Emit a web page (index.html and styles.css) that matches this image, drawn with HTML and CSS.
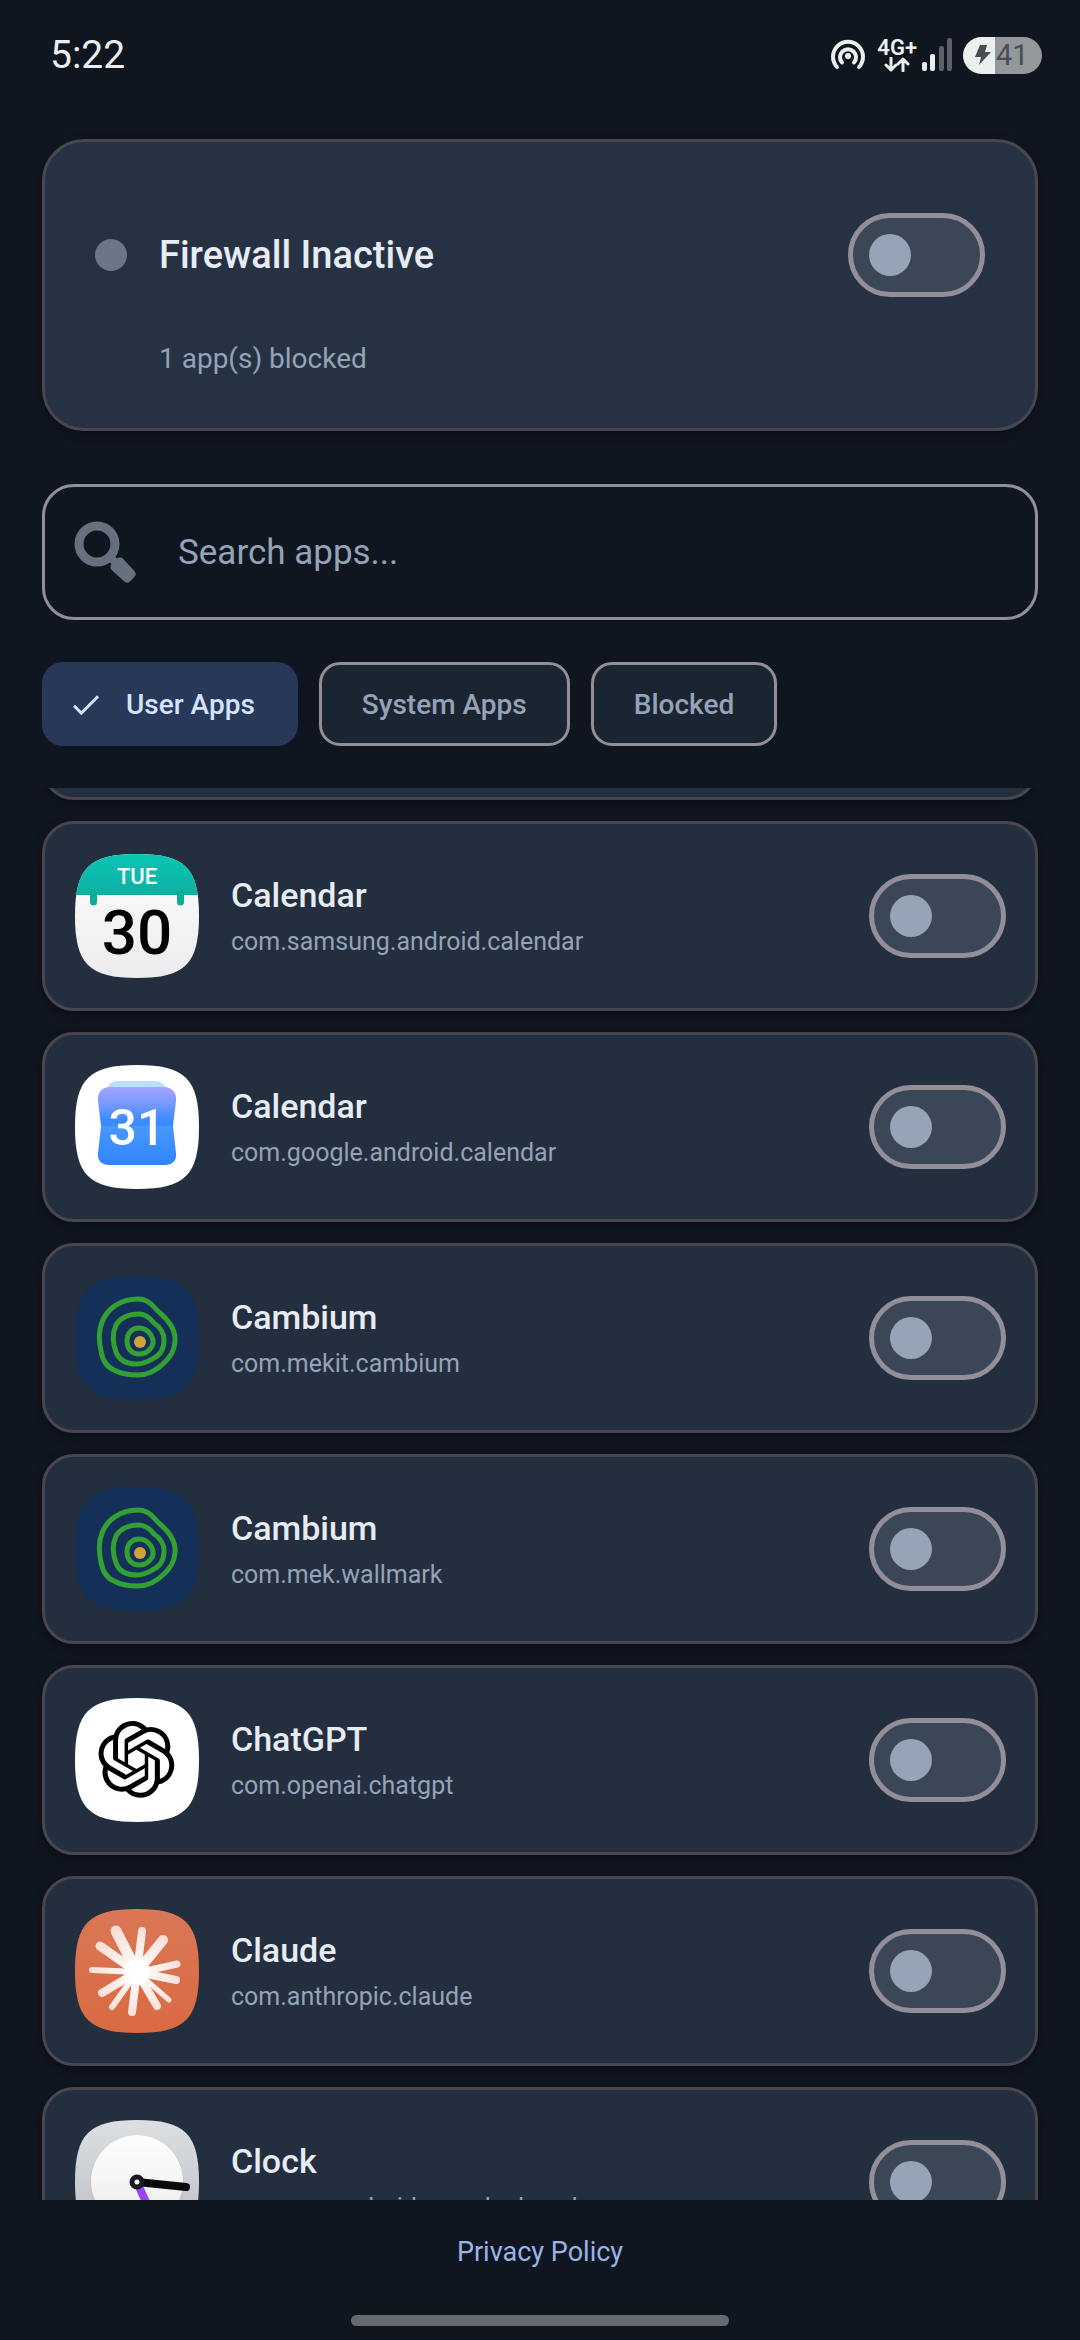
FILE: index.html
```html
<!DOCTYPE html>
<html lang="en">
<head>
  <meta charset="UTF-8" />
  <meta name="viewport" content="width=device-width, initial-scale=1.0" />
  <title>Firewall</title>
  <link rel="stylesheet" href="styles.css">
</head>
<body>
  <!-- shared icon shapes -->
  <svg class="defs" width="0" height="0" aria-hidden="true">
    <defs>
      <clipPath id="plate"><path d="M62 0C110 0 124 14 124 62C124 110 110 124 62 124C14 124 0 110 0 62C0 14 14 0 62 0Z"/></clipPath>
      <linearGradient id="teal" x1="0" y1="0" x2="0" y2="1"><stop offset="0" stop-color="#08c7b6"/><stop offset="1" stop-color="#0eafa0"/></linearGradient>
      <linearGradient id="paper" x1="0" y1="0" x2="0" y2="1"><stop offset="0" stop-color="#fdfdfd"/><stop offset="1" stop-color="#ececee"/></linearGradient>
      <linearGradient id="sheet" x1="0" y1="0" x2="0" y2="1"><stop offset="0" stop-color="#a5a4ff"/><stop offset=".2" stop-color="#7b9aff"/><stop offset=".42" stop-color="#3e8bff"/><stop offset=".49" stop-color="#3a89ff"/><stop offset=".5" stop-color="#4998ff"/><stop offset="1" stop-color="#3184ff"/></linearGradient>
      <linearGradient id="clay" x1="0" y1="0" x2="0" y2="1"><stop offset="0" stop-color="#da7756"/><stop offset="1" stop-color="#d96a42"/></linearGradient>
      <radialGradient id="burst" gradientUnits="userSpaceOnUse" cx="62" cy="63" r="48"><stop offset="0" stop-color="#ffffff"/><stop offset="1" stop-color="#f8ded5"/></radialGradient>
      <linearGradient id="steel" x1="0" y1="0" x2="0" y2="1"><stop offset="0" stop-color="#dce0e3"/><stop offset="1" stop-color="#b9bbc0"/></linearGradient>
    </defs>
    <symbol id="cambium" viewBox="0 0 124 124">
      <rect width="124" height="124" fill="#143059" clip-path="url(#plate)"/>
      <g fill="none" stroke="#32a032" stroke-width="5">
        <path d="M63 23C71 23 76 27 80 32C84 37 88 39 92 44C98 51 101 57 100 66C99 76 95 81 89 87C82 94 74 99 63 99C55 99 46 98 39 94C29 90 27 81 26 75C24 66 23 56 27 46C32 33 45 23 63 23Z"/>
        <path d="M64 38C71 38 75 42 79 47C85 51 89 56 89 64C89 72 87 78 79 82C74 85 70 88 62 88C51 88 44 84 41 76C38 68 37 58 41 49C45 42 54 38 64 38Z"/>
        <path d="M64 52C71 52 74 56 76 59C79 64 79 69 75 73C72 77 69 78 64 78C57 78 52 73 52 65C52 57 57 52 64 52Z"/>
      </g>
      <circle cx="65" cy="66" r="6" fill="#cda43b"/>
    </symbol>
  </svg>

  <header class="status-bar">
    <span class="clock">5:22</span>
    <div class="status-icons">
      <svg width="36" height="34" viewBox="0 0 36 34" fill="none" stroke="#eceff0" stroke-width="4" stroke-linecap="round">
        <path d="M7 29A15 15 0 1 1 29 29"/>
        <path d="M12 24.500A8 8 0 1 1 24 24.500"/>
        <circle cx="18" cy="18" r="3" fill="#eceff0" stroke="none"/>
      </svg>
      <div class="network">
        <span>4G+</span>
        <svg width="26" height="15" viewBox="0 0 26 15" fill="none" stroke="#eceff0" stroke-width="3" stroke-linecap="round" stroke-linejoin="round">
          <path d="M7 1V13M2 8L7 13L12 8M19 14V2M14 7L19 2L24 7"/>
        </svg>
      </div>
      <svg class="signal" width="30" height="34" viewBox="0 0 30 34">
        <rect x="0" y="24" width="5" height="9" rx="2" fill="#eceff0"/>
        <rect x="8" y="16" width="5" height="17" rx="2" fill="#eceff0"/>
        <rect x="17" y="8" width="5" height="25" rx="2" fill="#5c6067"/>
        <rect x="25" y="0" width="5" height="33" rx="2" fill="#5c6067"/>
      </svg>
      <div class="battery">
        <svg width="16" height="20" viewBox="0 0 16 20"><path d="M5 0H12L10 7H16L4 20L6 12H0Z" fill="#4a4d50"/></svg>
        <span>41</span>
      </div>
    </div>
  </header>

  <section class="firewall">
    <div class="firewall-row">
      <span class="dot"></span>
      <h1 id="fw">Firewall Inactive</h1>
      <input type="checkbox" class="switch" aria-labelledby="fw">
    </div>
    <p>1 app(s) blocked</p>
  </section>

  <label class="search">
    <svg width="62" height="62" viewBox="0 0 62 62" fill="none" stroke="#66717f">
      <circle cx="23" cy="23" r="18" stroke-width="9"/>
      <path d="M35 35L42 42" stroke-width="8"/>
      <path d="M46 41L57 53L53 57L41 46Z" fill="#66717f" stroke-width="9" stroke-linejoin="round"/>
    </svg>
    <input type="text" placeholder="Search apps..." aria-label="Search apps">
  </label>

  <div class="chips">
    <button class="chip selected" aria-pressed="true">
      <svg width="47" height="47" viewBox="0 0 24 24" fill="#d6e3ff"><path d="M9 16.170L4.830 12L3.410 13.410L9 19L21 7L19.590 5.590Z" transform="translate(2.500 3) scale(.76)"/></svg>
      User Apps
    </button>
    <button class="chip">System Apps</button>
    <button class="chip">Blocked</button>
  </div>

  <main class="app-list" id="appList">
    <div class="app"></div>
    <div class="app">
      <svg class="icon" viewBox="0 0 124 124">
        <g clip-path="url(#plate)">
          <rect width="124" height="124" fill="url(#paper)"/>
          <rect width="124" height="41" fill="url(#teal)"/>
          <path d="M18.500 40V48M105.500 40V48" stroke="#0eaa9b" stroke-width="7" stroke-linecap="round"/>
        </g>
        <text x="62" y="30" class="cal-day">TUE</text>
        <text x="62" y="100" class="cal-date">30</text>
      </svg>
      <label class="info" for="app1"><b>Calendar</b><small>com.samsung.android.calendar</small></label>
      <input type="checkbox" class="switch" id="app1">
    </div>
    <div class="app">
      <svg class="icon" viewBox="0 0 124 124">
        <rect width="124" height="124" fill="#fff" clip-path="url(#plate)"/>
        <path d="M32 24C34 18 38 16 43 16H80C86 16 89 19 92 24Z" fill="#bbe0fd"/>
        <path d="M35 22H89C97 22 102 28 101 36L98 61L101 88C102 96 97 100 90 100H34C27 100 22 96 23 88L26 61L23 36C22 28 27 22 35 22Z" fill="url(#sheet)"/>
        <text x="62" y="80" class="cal-google">31</text>
      </svg>
      <label class="info" for="app2"><b>Calendar</b><small>com.google.android.calendar</small></label>
      <input type="checkbox" class="switch" id="app2">
    </div>
    <div class="app">
      <svg class="icon"><use href="#cambium"/></svg>
      <label class="info" for="app3"><b>Cambium</b><small>com.mekit.cambium</small></label>
      <input type="checkbox" class="switch" id="app3">
    </div>
    <div class="app">
      <svg class="icon"><use href="#cambium"/></svg>
      <label class="info" for="app4"><b>Cambium</b><small>com.mek.wallmark</small></label>
      <input type="checkbox" class="switch" id="app4">
    </div>
    <div class="app">
      <svg class="icon" viewBox="0 0 124 124">
        <rect width="124" height="124" fill="#fff" clip-path="url(#plate)"/>
        <path transform="translate(23 23) scale(3.200)" d="M22.2819 9.8211a5.9847 5.9847 0 0 0-.5157-4.9108 6.0462 6.0462 0 0 0-6.5098-2.9A6.0651 6.0651 0 0 0 4.9807 4.1818a5.9847 5.9847 0 0 0-3.9977 2.9 6.0462 6.0462 0 0 0 .7427 7.0966 5.98 5.98 0 0 0 .511 4.9107 6.051 6.051 0 0 0 6.5146 2.9001A5.9847 5.9847 0 0 0 13.2599 24a6.0557 6.0557 0 0 0 5.7718-4.2058 5.9894 5.9894 0 0 0 3.9977-2.9001 6.0557 6.0557 0 0 0-.7475-7.0729zm-9.022 12.6081a4.4755 4.4755 0 0 1-2.8764-1.0408l.1419-.0804 4.7783-2.7582a.7948.7948 0 0 0 .3927-.6813v-6.7369l2.02 1.1686a.071.071 0 0 1 .038.052v5.5826a4.504 4.504 0 0 1-4.4945 4.4944zm-9.6607-4.1254a4.4708 4.4708 0 0 1-.5346-3.0137l.142.0852 4.783 2.7582a.7712.7712 0 0 0 .7806 0l5.8428-3.3685v2.3324a.0804.0804 0 0 1-.0332.0615L9.74 19.9502a4.4992 4.4992 0 0 1-6.1408-1.6464zM2.3408 7.8956a4.485 4.485 0 0 1 2.3655-1.9728V11.6a.7664.7664 0 0 0 .3879.6765l5.8144 3.3543-2.0201 1.1685a.0757.0757 0 0 1-.071 0l-4.8303-2.7865A4.504 4.504 0 0 1 2.3408 7.872zm16.5963 3.8558L13.1038 8.364 15.1192 7.2a.0757.0757 0 0 1 .071 0l4.8303 2.7913a4.4944 4.4944 0 0 1-.6765 8.1042v-5.6772a.79.79 0 0 0-.407-.667zm2.0107-3.0231l-.142-.0852-4.7735-2.7818a.7759.7759 0 0 0-.7854 0L9.409 9.2297V6.8974a.0662.0662 0 0 1 .0284-.0615l4.8303-2.7866a4.4992 4.4992 0 0 1 6.6802 4.66zM8.3065 12.863l-2.02-1.1638a.0804.0804 0 0 1-.038-.0567V6.0742a4.4992 4.4992 0 0 1 7.3757-3.4537l-.142.0805L8.704 5.459a.7948.7948 0 0 0-.3927.6813zm1.0976-2.3654l2.602-1.4998 2.6069 1.4998v2.9994l-2.5974 1.4997-2.6067-1.4997Z"/>
      </svg>
      <label class="info" for="app5"><b>ChatGPT</b><small>com.openai.chatgpt</small></label>
      <input type="checkbox" class="switch" id="app5">
    </div>
    <div class="app">
      <svg class="icon" viewBox="0 0 124 124">
        <rect width="124" height="124" fill="url(#clay)" clip-path="url(#plate)"/>
        <g stroke="url(#burst)" stroke-linecap="round">
          <path d="M62 63L41 22" stroke-width="11"/>
          <path d="M62 63L67 22" stroke-width="8"/>
          <path d="M62 63L88 31" stroke-width="10"/>
          <path d="M62 64L102 55" stroke-width="7"/>
          <path d="M62 63L101 71" stroke-width="8"/>
          <path d="M62 63L94 91" stroke-width="5"/>
          <path d="M62 63L82 97" stroke-width="8"/>
          <path d="M62 63L57 103" stroke-width="8"/>
          <path d="M62 63L37 98" stroke-width="6"/>
          <path d="M62 63L27 84" stroke-width="8"/>
          <path d="M62 63L17 61" stroke-width="6"/>
          <path d="M62 63L25 37" stroke-width="9"/>
        </g>
        <circle cx="62" cy="63" r="13" fill="#fff"/>
      </svg>
      <label class="info" for="app6"><b>Claude</b><small>com.anthropic.claude</small></label>
      <input type="checkbox" class="switch" id="app6">
    </div>
    <div class="app">
      <svg class="icon" viewBox="0 0 124 124">
        <rect width="124" height="124" fill="url(#steel)" clip-path="url(#plate)"/>
        <circle cx="62" cy="62" r="47" fill="#c3c6ca"/>
        <circle cx="62" cy="61" r="46" fill="url(#paper)"/>
        <path d="M62 62L78 98" stroke="#9b44f5" stroke-width="8" stroke-linecap="round"/>
        <path d="M62 62L111 67" stroke="#0b0b0c" stroke-width="8" stroke-linecap="round"/>
        <circle cx="62" cy="62" r="5" fill="#fff" stroke="#1b1820" stroke-width="5"/>
      </svg>
      <label class="info" for="app7"><b>Clock</b><small>com.sec.android.app.clockpackage</small></label>
      <input type="checkbox" class="switch" id="app7">
    </div>
  </main>

  <footer>
    <a href="#privacy">Privacy Policy</a>
    <div class="nav-handle"></div>
  </footer>

  <script>
    document.getElementById('appList').scrollTop = 178;
  </script>
</body>
</html>
```
FILE: styles.css
```css
* {
  box-sizing: border-box;
}
body {
  background-color: #101620;
  color: #e6ebf4;
  font-family: Roboto, "Noto Sans", sans-serif;
  margin: 0;
  height: 100vh;
  display: flex;
  flex-direction: column;
  overflow: hidden;
}
svg {
  display: block;
  flex: none;
}
.defs {
  position: absolute;
}
.status-bar {
  display: flex;
  justify-content: space-between;
  align-items: center;
  height: 110px;
  padding: 0 38px 0 50px;
  margin-bottom: 29px;
  color: #eceff0;
}
.clock {
  font-size: 39px;
}
.status-icons {
  display: flex;
  align-items: center;
}
.network {
  display: flex;
  flex-direction: column;
  align-items: center;
  margin: 0 5px 0 11px;
  font-size: 22px;
  font-weight: 600;
  line-height: 19px;
}
.battery {
  display: flex;
  align-items: center;
  gap: 5px;
  width: 79px;
  height: 37px;
  margin-left: 11px;
  padding-left: 12px;
  border-radius: 19px;
  background: linear-gradient(to right, #eceff0 32px, #94979c 32px);
  color: #4a4d50;
  font-size: 29px;
}
.firewall {
  margin: 0 42px 53px;
  padding: 50px;
  background-color: #263143;
  border: 3px solid #49464f;
  border-radius: 42px;
  box-shadow: 0 3px 10px #0a0e15;
}
.firewall-row {
  display: flex;
  align-items: center;
  height: 126px;
}
.dot {
  width: 32px;
  height: 32px;
  margin-right: 32px;
  border-radius: 50%;
  background-color: #6b7686;
}
h1 {
  flex: 1;
  margin: 0;
  font-size: 38px;
  font-weight: 500;
}
.firewall p {
  margin: 21px 0 0 64px;
  font-size: 28px;
  line-height: 39px;
  color: #94a3b8;
}
.switch {
  appearance: none;
  display: flex;
  align-items: center;
  flex: none;
  width: 137px;
  height: 84px;
  margin: 0;
  padding-left: 16px;
  border: 5px solid #938f99;
  border-radius: 42px;
  background-color: #3b4756;
}
.switch::before {
  content: "";
  width: 42px;
  height: 42px;
  border-radius: 50%;
  background-color: #97a4b7;
}
.switch:checked {
  justify-content: flex-end;
  padding: 0 16px 0 0;
}
.search {
  display: flex;
  align-items: center;
  gap: 42px;
  height: 136px;
  margin: 0 42px 42px;
  padding: 0 29px;
  border: 3px solid #938f99;
  border-radius: 32px;
}
.search input {
  flex: 1;
  padding: 0;
  border: none;
  outline: none;
  background: none;
  color: #e6ebf4;
  font: inherit;
  font-size: 35px;
}
.search input::placeholder {
  color: #94a3b8;
}
.chips {
  display: flex;
  gap: 21px;
  margin: 0 42px 42px;
}
.chip {
  display: flex;
  align-items: center;
  gap: 16px;
  height: 84px;
  padding: 0 40px;
  border: 3px solid #938f99;
  border-radius: 21px;
  background-color: #1b2431;
  color: #94a3b8;
  font: inherit;
  font-size: 28px;
  font-weight: 500;
}
.chip.selected {
  padding-left: 21px;
  padding-right: 43px;
  border: none;
  background-color: #283858;
  color: #d6e3ff;
}
.app-list {
  flex: 1;
  min-height: 0;
  display: flex;
  flex-direction: column;
  gap: 21px;
  padding: 0 42px;
  overflow-y: auto;
  scrollbar-width: none;
}
.app {
  display: flex;
  align-items: center;
  flex: none;
  height: 190px;
  padding: 0 29px 0 30px;
  background-color: #232e3e;
  border: 3px solid #49464f;
  border-radius: 32px;
  box-shadow: 0 3px 8px #0a0e15;
}
.icon {
  width: 124px;
  height: 124px;
  margin-right: 32px;
}
.icon text {
  text-anchor: middle;
}
.cal-day {
  fill: #fff;
  font-size: 22px;
  font-weight: 500;
}
.cal-date {
  font-size: 62px;
  font-weight: 500;
}
.cal-google {
  fill: #fff;
  font-size: 50px;
  font-weight: 500;
}
.info {
  flex: 1;
  display: flex;
  flex-direction: column;
  gap: 2px;
}
.info b {
  font-size: 34px;
  font-weight: 500;
  line-height: 50px;
}
.info small {
  font-size: 25px;
  line-height: 40px;
  color: #94a3b8;
}
footer {
  display: flex;
  flex-direction: column;
  align-items: center;
  justify-content: space-between;
  height: 140px;
  padding: 34px 0 14px;
}
footer a {
  color: #9ab4e8;
  font-size: 27px;
  line-height: 36px;
  text-decoration: none;
}
.nav-handle {
  width: 35%;
  height: 11px;
  border-radius: 6px;
  background-color: #66696f;
}
```
